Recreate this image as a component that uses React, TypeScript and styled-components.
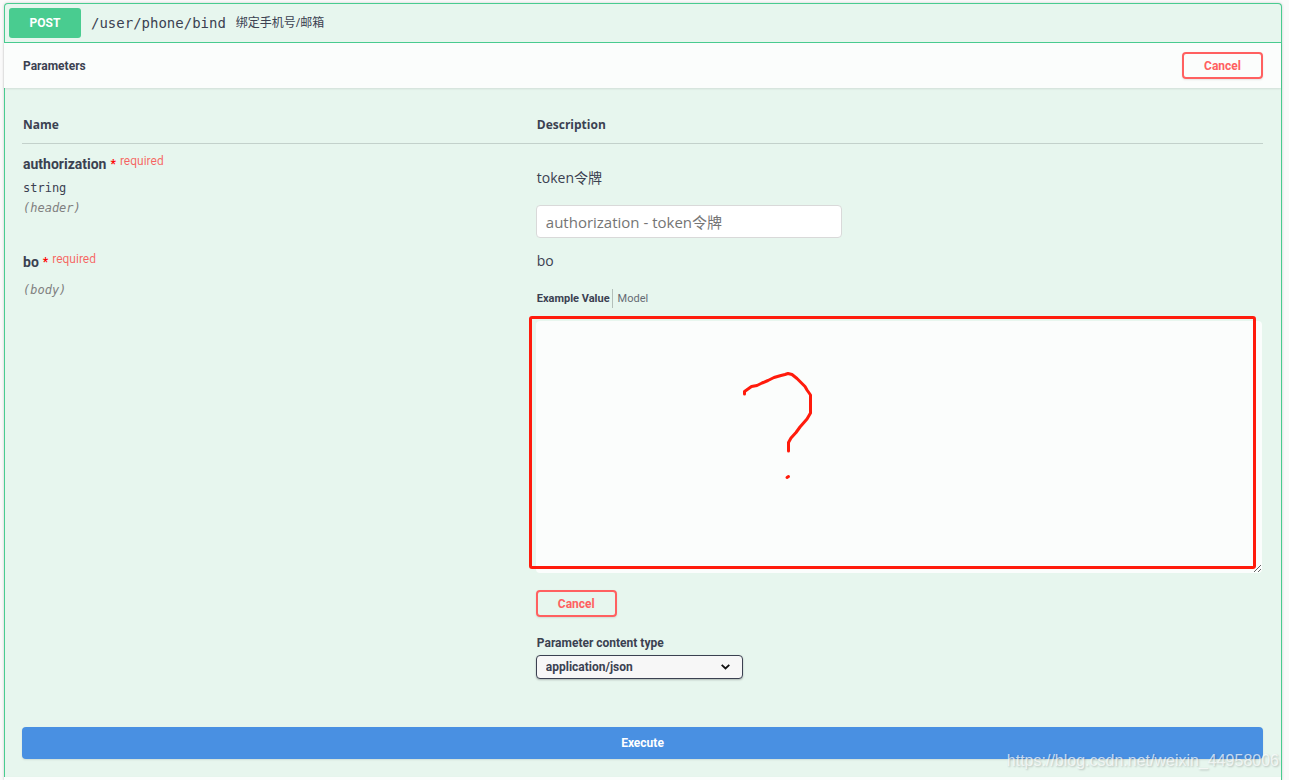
import React from "react";
import styled, { createGlobalStyle } from "styled-components";

const ui = `Roboto, "Noto Sans CJK SC", sans-serif`;
const body = `"Open Sans", "Noto Sans CJK SC", sans-serif`;
const mono = `"DejaVu Sans Mono", monospace`;
const ink = "#3b4151";
const green = "#49cc90";

const GlobalStyle = createGlobalStyle`
  *, *::before, *::after { box-sizing: border-box; }
  body { margin: 0; background: #fafafa; color: ${ink}; font-family: ${body}; }
`;

const Page = styled.main`
  position: relative;
  display: flex;
  min-height: 100vh;
  padding: 3px 7px 0 4px;
`;

const Operation = styled.section`
  display: flex;
  flex-direction: column;
  flex: 1;
  min-width: 0;
  border: 1px solid ${green};
  border-bottom: 0;
  border-radius: 4px 4px 0 0;
  background: #e7f6ee;
  box-shadow: 0 0 3px rgba(0, 0, 0, 0.19);
`;

const Summary = styled.header`
  display: flex;
  align-items: center;
  gap: 10px;
  padding: 4px;
  border-bottom: 1px solid ${green};
`;

const Method = styled.button`
  width: 72px;
  height: 30px;
  padding: 0;
  border: 0;
  border-radius: 3px;
  background: ${green};
  color: #fff;
  font: 700 12px ${ui};
`;

const Path = styled.span`
  font: 14px/20px ${mono};
`;

const Note = styled.span`
  font: 12px/20px ${body};
`;

const SectionBar = styled.div`
  display: flex;
  align-items: center;
  justify-content: space-between;
  margin-left: -1px;
  padding: 9px 18px 9px 19px;
  background: #fbfdfc;
  box-shadow: 0 1px 2px rgba(0, 0, 0, 0.1);
`;

const NextBar = styled(SectionBar)`
  flex: 1;
  padding: 0;
  min-height: 3px;
`;

const SectionTitle = styled.h4`
  margin: 0;
  font: 700 12px/20px ${ui};
`;

const CancelButton = styled.button`
  display: block;
  width: 81px;
  height: 27px;
  padding: 0;
  border: 2px solid #ff6060;
  border-radius: 4px;
  background: transparent;
  color: #ff6060;
  font: 700 12px ${ui};
  box-shadow: 0 1px 2px rgba(0, 0, 0, 0.1);
`;

const Content = styled.div`
  padding: 27px 18px 18px 17px;
`;

const Params = styled.table`
  width: 100%;
  border-collapse: collapse;
  table-layout: fixed;
`;

const HeadCell = styled.th<{ $name?: boolean }>`
  width: ${(p) => (p.$name ? "41%" : "auto")};
  padding: 0 0 8px ${(p) => (p.$name ? 1 : 6)}px;
  border-bottom: 1px solid #c3d1cb;
  text-align: left;
  font: 700 12px/20px ${body};
`;

const NameCell = styled.td`
  padding: 10px 0 0 1px;
  vertical-align: top;
  tr + tr > & { padding-top: 14px; }
`;

const ValueCell = styled.td`
  padding: 0 0 0 6px;
  vertical-align: top;
`;

const ParamName = styled.div`
  display: flex;
  gap: 4px;
  font: 700 14px/20px ${ui};
`;

const Star = styled.span`
  color: #f00;
  font-size: 12px;
`;

const Required = styled.span`
  color: rgba(255, 0, 0, 0.6);
  font: 400 12px/14px ${ui};
`;

const ParamType = styled.div`
  padding-top: 4px;
  font: 12px/20px ${mono};
`;

const ParamIn = styled.div<{ $apart?: boolean }>`
  padding-top: ${(p) => (p.$apart ? 8 : 0)}px;
  color: #808080;
  font: italic 12px/20px ${mono};
`;

const Text = styled.p<{ $first?: boolean }>`
  margin: 0;
  padding: ${(p) => (p.$first ? "24px 0 17px" : "13px 0 18px")};
  font: 14px/20px ${body};
`;

const TokenInput = styled.input`
  display: block;
  width: 306px;
  height: 33px;
  margin-left: -1px;
  padding: 0 9px;
  border: 1px solid #d9d9d9;
  border-radius: 4px;
  background: #fff;
  color: ${ink};
  font: 15px ${body};
  &::placeholder { color: #757575; }
`;

const Tabs = styled.div`
  display: flex;
  height: 19px;
  margin-bottom: 13px;
`;

const Tab = styled.button<{ $active?: boolean }>`
  padding: 0 ${(p) => (p.$active ? "2px 0 0" : "5px")};
  border: 0;
  border-right: ${(p) => (p.$active ? "1px solid #b4c0ba" : "0")};
  background: none;
  color: ${(p) => (p.$active ? ink : "#666b74")};
  font: ${(p) => (p.$active ? 700 : 400)} 11px/20px ${ui};
`;

const Editor = styled.div`
  position: relative;
  margin: 0 1px 17px -1px;
`;

const BodyInput = styled.textarea`
  display: block;
  width: 100%;
  height: 252px;
  padding: 10px;
  border: 0;
  border-radius: 4px;
  background: #fbfdfc;
  resize: both;
  font: 12px ${mono};
`;

const Marker = styled.div`
  position: absolute;
  inset: -5px 6px 4px -7px;
  border: 3px solid #ff1b0c;
  border-radius: 3px;
  pointer-events: none;
  > svg { position: absolute; left: 208px; top: 50px; }
`;

const EditorActions = styled.div`
  margin-left: -1px;
`;

const TypeLabel = styled.label`
  display: block;
  padding: 16px 0 2px;
  font: 700 12px/20px ${ui};
`;

const SelectWrap = styled.div`
  display: grid;
  width: 207px;
  align-items: center;
  margin-left: -1px;
  > * { grid-area: 1 / 1; }
  > svg { justify-self: end; margin-right: 13px; pointer-events: none; }
`;

const TypeSelect = styled.select`
  appearance: none;
  width: 100%;
  height: 24px;
  padding: 0 9px;
  border: 1px solid ${ink};
  border-radius: 4px;
  background: #f7f7f7;
  color: ${ink};
  font: 700 12px ${ui};
  box-shadow: 0 1px 2px rgba(0, 0, 0, 0.25);
`;

const Execute = styled.button`
  display: block;
  width: 100%;
  height: 32px;
  margin-top: 48px;
  border: 0;
  border-radius: 4px;
  background: #4990e2;
  color: #fff;
  font: 700 12px ${ui};
  box-shadow: 0 1px 2px rgba(0, 0, 0, 0.1);
`;

const Watermark = styled.span`
  position: absolute;
  right: 10px;
  bottom: 9px;
  color: rgba(255, 255, 255, 0.7);
  font: 16px/20px "Liberation Sans", sans-serif;
  text-shadow: 1px 1px 2px rgba(0, 0, 0, 0.22);
  pointer-events: none;
`;

export default function App() {
  return (
    <>
      <GlobalStyle />
      <Page>
        <Operation>
          <Summary>
            <Method type="button">POST</Method>
            <Path>/user/phone/bind</Path>
            <Note>绑定手机号/邮箱</Note>
          </Summary>
          <SectionBar>
            <SectionTitle>Parameters</SectionTitle>
            <CancelButton type="button">Cancel</CancelButton>
          </SectionBar>
          <Content>
            <Params>
              <thead>
                <tr>
                  <HeadCell $name>Name</HeadCell>
                  <HeadCell>Description</HeadCell>
                </tr>
              </thead>
              <tbody>
                <tr>
                  <NameCell>
                    <ParamName>
                      authorization<Star>*</Star>
                      <Required>required</Required>
                    </ParamName>
                    <ParamType>string</ParamType>
                    <ParamIn>(header)</ParamIn>
                  </NameCell>
                  <ValueCell>
                    <Text $first>token令牌</Text>
                    <TokenInput aria-label="authorization" placeholder="authorization - token令牌" />
                  </ValueCell>
                </tr>
                <tr>
                  <NameCell>
                    <ParamName>
                      bo<Star>*</Star>
                      <Required>required</Required>
                    </ParamName>
                    <ParamIn $apart>(body)</ParamIn>
                  </NameCell>
                  <ValueCell>
                    <Text>bo</Text>
                    <Tabs>
                      <Tab type="button" $active>Example Value</Tab>
                      <Tab type="button">Model</Tab>
                    </Tabs>
                    <Editor>
                      <BodyInput aria-label="bo" />
                      <Marker>
                        <svg width="80" height="120" viewBox="740 369 80 120" fill="none" stroke="#ff1b0c" strokeWidth="3" strokeLinecap="round" strokeLinejoin="round" aria-hidden="true">
                          <path d="M744.5 394V391.500L748 389L751.500 386.500L757 385.500L762 383L768 380.500L774 377.500L781 375.500L785 374.500L788 373.500L792 374.500L797 378.500L805 386.500L807 390L810.500 395V413L807 419L800 427L796 432.500L791 438L788.500 442.500V451" />
                          <path d="M787 477.500L788.500 476.500" />
                        </svg>
                      </Marker>
                    </Editor>
                    <EditorActions>
                      <CancelButton type="button">Cancel</CancelButton>
                    </EditorActions>
                    <TypeLabel htmlFor="content-type">Parameter content type</TypeLabel>
                    <SelectWrap>
                      <TypeSelect id="content-type">
                        <option>application/json</option>
                      </TypeSelect>
                      <svg width="9" height="6" viewBox="0 0 9 6" fill="none" stroke="#111" strokeWidth="1.8" aria-hidden="true">
                        <path d="M.7.8 4.500 4.500 8.300.8" />
                      </svg>
                    </SelectWrap>
                  </ValueCell>
                </tr>
              </tbody>
            </Params>
            <Execute type="button">Execute</Execute>
          </Content>
          <NextBar />
        </Operation>
        <Watermark>https://blog.csdn.net/weixin_44958006</Watermark>
      </Page>
    </>
  );
}
